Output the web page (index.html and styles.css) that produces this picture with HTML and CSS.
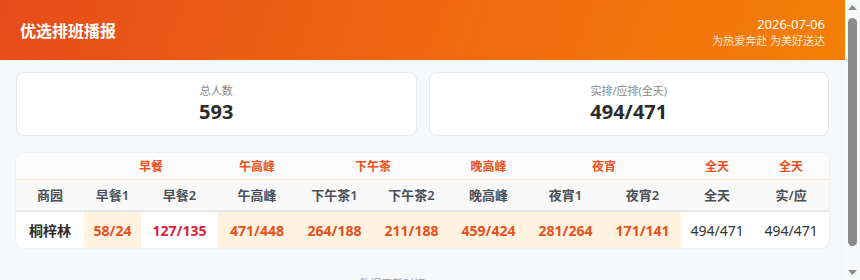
FILE: index.html
```html
<!DOCTYPE html>
<html lang="zh-CN">
<head>
<meta charset="utf-8">
<title>优选排班播报</title>
<link rel="stylesheet" href="styles.css">
</head>
<body>
<div class="frame">
<div class="page">
<header class="topbar">
  <h1 class="title">优选排班播报</h1>
  <div class="meta">
    <div class="date">2026-07-06</div>
    <div class="slogan">为热爱奔赴 为美好送达</div>
  </div>
</header>
<main class="main">
  <section class="cards">
    <div class="card">
      <div class="card-label">总人数</div>
      <div class="card-value">593</div>
    </div>
    <div class="card">
      <div class="card-label">实排/应排(全天)</div>
      <div class="card-value">494/471</div>
    </div>
  </section>
  <section class="table-wrap">
    <table class="grid">
      <colgroup>
        <col class="w-park">
        <col class="w-57">
        <col class="w-77">
        <col class="w-78">
        <col class="w-77">
        <col class="w-77">
        <col class="w-77">
        <col class="w-77">
        <col class="w-77">
        <col class="w-72">
        <col class="w-76">
      </colgroup>
      <thead>
        <tr class="group-row">
          <th></th>
          <th colspan="2">早餐</th>
          <th>午高峰</th>
          <th colspan="2">下午茶</th>
          <th>晚高峰</th>
          <th colspan="2">夜宵</th>
          <th>全天</th>
          <th>全天</th>
        </tr>
        <tr class="head-row">
          <th>商园</th>
          <th>早餐1</th>
          <th>早餐2</th>
          <th>午高峰</th>
          <th>下午茶1</th>
          <th>下午茶2</th>
          <th>晚高峰</th>
          <th>夜宵1</th>
          <th>夜宵2</th>
          <th>全天</th>
          <th>实/应</th>
        </tr>
      </thead>
      <tbody>
        <tr class="data-row">
          <td class="park">桐梓林</td>
          <td class="hot">58/24</td>
          <td class="short">127/135</td>
          <td class="hot">471/448</td>
          <td class="hot">264/188</td>
          <td class="hot">211/188</td>
          <td class="hot">459/424</td>
          <td class="hot">281/264</td>
          <td class="hot">171/141</td>
          <td class="plain">494/471</td>
          <td class="plain">494/471</td>
        </tr>
      </tbody>
    </table>
  </section>
  <footer class="foot">数据更新时间 2026-07-06</footer>
</main>
</div>
<div class="scrollbar" aria-hidden="true">
  <svg class="sb-arrow" width="15" height="15" viewBox="0 0 15 15"><polygon points="3,10 12,10 7.5,5" fill="#8b8b8b"/></svg>
  <div class="sb-track"><div class="sb-thumb"></div></div>
  <svg class="sb-arrow" width="15" height="15" viewBox="0 0 15 15"><polygon points="3,5 12,5 7.5,10" fill="#8b8b8b"/></svg>
</div>
</div>
</body>
</html>
```

FILE: styles.css
```css
* { box-sizing: border-box; }
html, body { margin: 0; padding: 0; height: 100%; overflow: hidden; }
body {
  background: #f6f7f9;
  font-family: "Noto Sans", "Noto Sans CJK SC", sans-serif;
  color: #333;
}
.frame {
  display: flex;
  height: 100vh;
}
.page {
  flex: 1;
  min-width: 0;
  overflow: hidden;
}
.scrollbar {
  width: 15px;
  flex: none;
  display: flex;
  flex-direction: column;
  background: #f8f9fa;
}
.sb-arrow {
  display: block;
  flex: none;
}
.sb-track {
  flex: 1;
  padding: 3px 3px 0;
}
.sb-thumb {
  height: 228px;
  background: #8b8b8b;
  border-radius: 5px;
}
.topbar {
  height: 60px;
  background: linear-gradient(110deg, #e64c1a 0%, #ef6a10 55%, #f57f06 100%);
  display: flex;
  align-items: center;
  justify-content: space-between;
  padding: 0 20px;
  color: #fff;
}
.title {
  margin: 0;
  font-size: 16px;
  font-weight: 700;
  line-height: 22px;
  padding-top: 2px;
}
.meta {
  text-align: right;
  padding-top: 4px;
}
.date {
  font-size: 13px;
  line-height: 17px;
}
.slogan {
  font-size: 11px;
  line-height: 16px;
  color: rgba(255, 255, 255, 0.85);
}
.main {
  padding: 12px 16px 14px;
}
.cards {
  display: grid;
  grid-template-columns: 1fr 1fr;
  gap: 12px;
}
.card {
  background: #fff;
  border: 1px solid #e4e7ec;
  border-radius: 8px;
  padding: 10px;
  text-align: center;
}
.card-label {
  font-size: 11px;
  line-height: 16px;
  color: #888;
}
.card-value {
  font-size: 20px;
  line-height: 26px;
  font-weight: 700;
  color: #2b2b2b;
}
.table-wrap {
  margin-top: 17px;
  background: #fff;
  border-radius: 8px;
  overflow: hidden;
  box-shadow: 0 0 0 1px #f0f1f4;
}
.grid {
  width: 100%;
  table-layout: fixed;
  border-collapse: collapse;
  text-align: center;
}
.w-park { width: 68px; }
.w-57 { width: 57px; }
.w-72 { width: 72px; }
.w-76 { width: 76px; }
.w-77 { width: 77px; }
.w-78 { width: 78px; }
.grid th, .grid td { padding: 0; }
.group-row th {
  height: 26px;
  background: #fcfcfc;
  color: #f0501e;
  font-size: 12px;
  font-weight: 600;
  border-bottom: 1px solid #fde2bf;
}
.head-row th {
  height: 32px;
  background: #f9f9fa;
  color: #4a4f57;
  font-size: 13px;
  font-weight: 600;
  border-bottom: 2px solid #e6e7ec;
}
.data-row td {
  height: 37px;
  font-size: 14px;
}
.park {
  font-weight: 600;
  color: #2f2f2f;
}
.hot {
  background: #fff2df;
  color: #e8501c;
  font-weight: 700;
}
.short {
  color: #dc1e3c;
  font-weight: 700;
}
.plain {
  color: #333;
  font-weight: 400;
}
.foot {
  margin-top: 28px;
  text-align: center;
  font-size: 11px;
  line-height: 16px;
  color: #9aa0a8;
}
```
